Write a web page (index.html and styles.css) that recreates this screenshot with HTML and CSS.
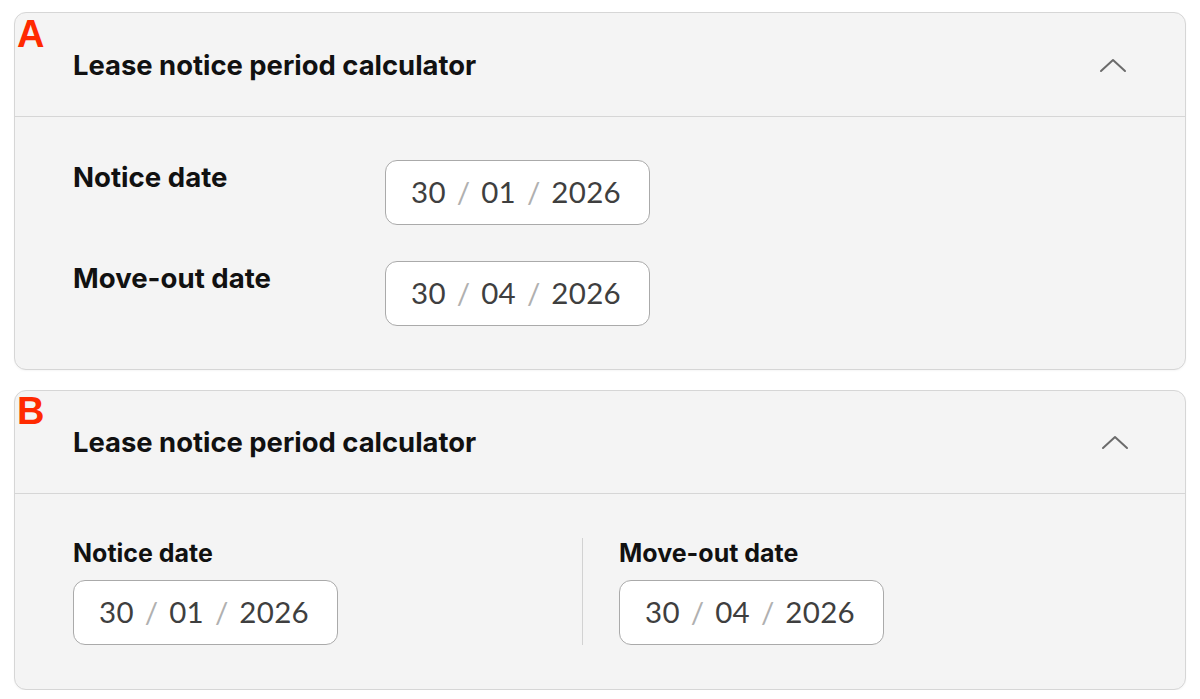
FILE: index.html
```html
<!DOCTYPE html>
<html lang="en">
<head>
<meta charset="utf-8">
<title>Lease notice period calculator</title>
<link rel="stylesheet" href="styles.css">
</head>
<body>
<div class="page">
  <section class="card card-a">
    <span class="tag">A</span>
    <header class="card-head">
      <h2 class="card-title">Lease notice period calculator</h2>
      <svg class="chev" width="28" height="16" viewBox="0 0 28 16" aria-hidden="true"><path d="M2 14 L14 3 L26 14" fill="none" stroke="#6b6b6b" stroke-width="2" stroke-linecap="round" stroke-linejoin="round"/></svg>
    </header>
    <div class="body-a">
      <div class="label-a">Notice date</div>
      <div class="date"><span>30</span><i>/</i><span>01</span><i>/</i><span>2026</span></div>
      <div class="label-a">Move-out date</div>
      <div class="date"><span>30</span><i>/</i><span>04</span><i>/</i><span>2026</span></div>
    </div>
  </section>

  <section class="card card-b">
    <span class="tag">B</span>
    <header class="card-head">
      <h2 class="card-title">Lease notice period calculator</h2>
      <svg class="chev" width="28" height="16" viewBox="0 0 28 16" aria-hidden="true"><path d="M2 14 L14 3 L26 14" fill="none" stroke="#6b6b6b" stroke-width="2" stroke-linecap="round" stroke-linejoin="round"/></svg>
    </header>
    <div class="body-b">
      <div class="col col-left">
        <div class="label-b">Notice date</div>
        <div class="date"><span>30</span><i>/</i><span>01</span><i>/</i><span>2026</span></div>
      </div>
      <div class="col col-right">
        <div class="label-b">Move-out date</div>
        <div class="date"><span>30</span><i>/</i><span>04</span><i>/</i><span>2026</span></div>
      </div>
    </div>
  </section>
</div>
</body>
</html>
```

FILE: styles.css
```css
* { box-sizing: border-box; }
html, body { margin: 0; padding: 0; background: #ffffff; }
body { font-family: "Inter", "Liberation Sans", sans-serif; color: #111; }

.page {
  padding: 12px 14px 0 14px;
  display: flex;
  flex-direction: column;
  gap: 20px;
}

.card {
  position: relative;
  background: #f4f4f4;
  border: 1px solid #d6d6d6;
  border-radius: 12px;
  box-shadow: 0 1px 2px rgba(0,0,0,0.04);
}

.tag {
  position: absolute;
  left: 2px;
  top: 2px;
  font-family: "Liberation Sans", "Inter", sans-serif;
  font-weight: 700;
  font-size: 38px;
  line-height: 38px;
  color: #ff2a00;
}
.card-b .tag { top: 1px; }

.card-head {
  display: flex;
  align-items: center;
  justify-content: space-between;
  padding: 0 58px 0 58px;
  height: 104px;
  border-bottom: 1px solid #d6d6d6;
}
.card-b .card-head { height: 103px; padding-right: 56px; }

.card-title {
  margin: 0;
  font-size: 27.4px;
  font-weight: 700;
  letter-spacing: 0;
  color: #111;
}

.chev { display: block; }

.body-a {
  display: grid;
  grid-template-columns: 312px auto;
  justify-content: start;
  row-gap: 36px;
  padding: 43px 58px 43px 58px;
}

.label-a {
  font-size: 27.6px;
  font-weight: 700;
  letter-spacing: 0;
  line-height: 34px;
}

.date {
  display: inline-flex;
  align-items: center;
  width: 265px;
  height: 65px;
  padding: 0 0 3px 25px;
  background: #fff;
  border: 1.5px solid #aaaaaa;
  border-radius: 12px;
  font-family: "Lato", "Open Sans", sans-serif;
  font-size: 29.5px;
  color: #3f3f3f;
}
.date span { letter-spacing: 0.3px; }
.date i {
  font-style: normal;
  color: #b0b0b0;
  margin: 0 11px;
}

.body-b {
  display: flex;
  padding: 44px 58px 44px 58px;
}

.col { display: flex; flex-direction: column; gap: 11px; }
.col-left { flex: 0 0 509px; }
.col-right {
  border-left: 1.5px solid #d2d2d2;
  padding-left: 36px;
}

.label-b {
  font-size: 25px;
  font-weight: 700;
  letter-spacing: 0;
  line-height: 31px;
}
```
